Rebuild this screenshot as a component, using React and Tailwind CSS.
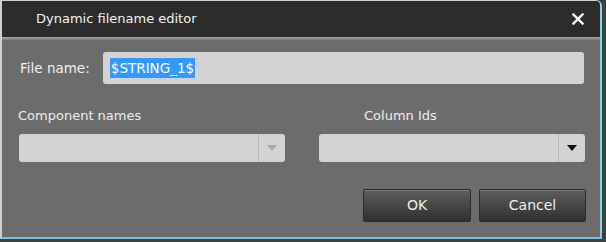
import React from 'react'

const font = { fontFamily: 'Tahoma, "DejaVu Sans", Verdana, sans-serif' }

const Combo = ({ dark }) => (
  <div className="flex h-[28px] w-[266px] rounded-[3px] bg-[#d3d3d3] overflow-hidden">
    <div className="flex-1 border-r border-[#b8b8b8]" />
    <div className="w-[26px] flex items-center justify-center">
      <svg width="10" height="6" viewBox="0 0 10 6">
        <path d="M0 0 L10 0 L5 6 Z" fill={dark ? '#111111' : '#a8a8a8'} />
      </svg>
    </div>
  </div>
)

const DialogButton = ({ children, width }) => (
  <button
    className={`h-[33px] ${width} rounded-[2px] border border-[#2a2a2a] bg-gradient-to-b from-[#5e5e5e] to-[#303030] text-[#f0f0f0] text-[14px] shadow-[inset_0_1px_0_#7a7a7a]`}
  >
    {children}
  </button>
)

export default function App() {
  return (
    <div className="w-[606px] h-[242px] bg-[#404040]" style={font}>
      <div className="w-[602px] h-[239px] flex flex-col border-l-2 border-t border-[#d0d0d0] border-r-2 border-r-[#86d2ec] border-b-2 border-b-[#6cc6e4] rounded-tr-[6px] overflow-hidden">
        {/* Title bar */}
        <div className="h-[36px] bg-[#2c2c2c] flex items-center justify-between pl-[34px] pr-[16px]">
          <span className="text-[#f2f2f2] text-[13px]">Dynamic filename editor</span>
          <svg width="12" height="12" viewBox="0 0 12 12">
            <path d="M1.5 1.5 L10.5 10.5 M10.5 1.5 L1.5 10.5" stroke="#ffffff" strokeWidth="2.4" strokeLinecap="square" />
          </svg>
        </div>
        <div className="h-[3px] bg-gradient-to-b from-[#a8a8a8] to-[#7a7a7a]" />

        {/* Body */}
        <div className="flex-1 bg-[#6c6c6c] pt-[12px] pl-[16px] pr-[16px] flex flex-col">
          <div className="flex items-center">
            <span className="w-[85px] pl-[2px] text-[#f0f0f0] text-[13.5px]">File name:</span>
            <div className="h-[32px] w-[482px] rounded-[3px] bg-[#d3d3d3] flex items-center pl-[7px]">
              <span className="bg-[#3399ff] text-white text-[13.5px] leading-[20px] px-[1px]">$STRING_1$</span>
            </div>
          </div>

          <div className="flex justify-between mt-[23px] w-[567px] pl-[1px]">
            <div className="flex flex-col">
              <span className="text-[#eeeeee] text-[13px] leading-[18px] -ml-[1px]">Component names</span>
              <div className="mt-[9px]">
                <Combo />
              </div>
            </div>
            <div className="flex flex-col">
              <span className="text-[#eeeeee] text-[13px] leading-[18px] pl-[45px]">Column Ids</span>
              <div className="mt-[9px]">
                <Combo dark />
              </div>
            </div>
          </div>

          <div className="flex justify-end gap-[8px] mt-[27px] w-[568px]">
            <DialogButton width="w-[108px]">OK</DialogButton>
            <DialogButton width="w-[107px]">Cancel</DialogButton>
          </div>
        </div>
      </div>
    </div>
  )
}
